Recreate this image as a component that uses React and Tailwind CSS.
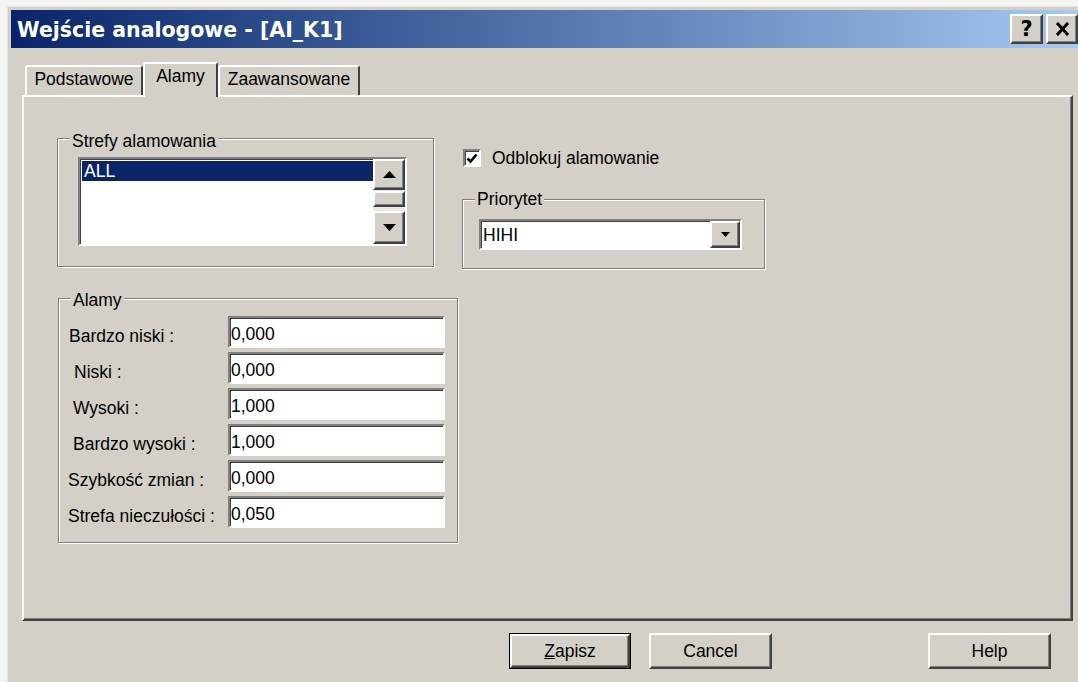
import React from "react";

const raised =
  "border-2 border-t-white border-l-white border-r-[#404040] border-b-[#404040] shadow-[inset_-1px_-1px_0_#808080] bg-[#d4d0c8]";
const sunken =
  "border-2 border-t-[#808080] border-l-[#808080] border-r-white border-b-white shadow-[inset_1px_1px_0_#404040] bg-white";
const etched = "border border-[#808080] shadow-[inset_1px_1px_0_#fff,1px_1px_0_#fff]";

const alarmRows = [
  { label: "Bardzo niski :", value: "0,000", pad: "pl-[10px]" },
  { label: "Niski :", value: "0,000", pad: "pl-[15px]" },
  { label: "Wysoki :", value: "1,000", pad: "pl-[14px]" },
  { label: "Bardzo wysoki :", value: "1,000", pad: "pl-[14px]" },
  { label: "Szybkość zmian :", value: "0,000", pad: "pl-[9px]" },
  { label: "Strefa nieczułości :", value: "0,050", pad: "pl-[9px]" },
];

function GroupBox({ label, labelPos, className, children }) {
  return (
    <div className={`relative ${etched} ${className}`}>
      <span className={`absolute left-[12px] ${labelPos} bg-[#d4d0c8] px-[2px] leading-[20px] whitespace-nowrap`}>
        {label}
      </span>
      {children}
    </div>
  );
}

function Arrow({ dir = "down", w = 13, h = 7 }) {
  const pts = dir === "up" ? `0,${h} ${w},${h} ${w / 2},0` : `0,0 ${w},0 ${w / 2},${h}`;
  return (
    <svg width={w} height={h} viewBox={`0 0 ${w} ${h}`}>
      <polygon points={pts} fill="#000" />
    </svg>
  );
}

function Tab({ children, active, className }) {
  return (
    <div
      className={`flex justify-center pt-[2px] leading-[20px] rounded-t-[3px] border-t-2 border-l-2 border-r-2 border-t-white border-l-white border-r-[#404040] bg-[#d4d0c8] ${
        active ? "relative z-10 h-[35px] -mb-[2px]" : "h-[30px]"
      } ${className}`}
    >
      {children}
    </div>
  );
}

function Button({ children, isDefault, className }) {
  if (isDefault) {
    return (
      <div className={`border border-black h-[36px] ${className}`}>
        <div className={`${raised} h-full flex items-center justify-center`}>{children}</div>
      </div>
    );
  }
  return (
    <div className={`${raised} h-[36px] flex items-center justify-center ${className}`}>{children}</div>
  );
}

export default function App() {
  return (
    <div className="w-[1078px] h-[682px] overflow-hidden bg-[#f4f4f2] pl-[7px] pt-[6px] font-['Liberation_Sans',Arial,sans-serif] text-[17.5px] text-black">
      <div className="w-[1100px] h-[700px] bg-[#d4d0c8] border-l border-t border-[#e8e6e0] pl-[3px] pt-[3px]">
        {/* title bar */}
        <div className="w-[1068px] h-[38px] flex items-center justify-between bg-linear-to-r from-[#0a246a] to-[#a6caf0] pl-[6px] pr-[1px]">
          <span className="pt-[3px] font-['DejaVu_Sans',Verdana,sans-serif] font-bold text-[20.5px] text-white whitespace-nowrap">
            Wejście analogowe - [AI_K1]
          </span>
          <div className="flex gap-[3px]">
            <div className={`${raised} w-[33px] h-[30px] flex items-center justify-center font-['DejaVu_Sans',sans-serif] font-bold text-[21px] leading-none`}>
              ?
            </div>
            <div className={`${raised} w-[32px] h-[30px] flex items-center justify-center`}>
              <svg width="15" height="14" viewBox="0 0 15 14">
                <path d="M2 1 L13 13 M13 1 L2 13" stroke="#000" strokeWidth="3" />
              </svg>
            </div>
          </div>
        </div>

        <div className="pl-[11px] mt-[14px]">
          {/* tabs */}
          <div className="flex items-end h-[33px] pl-[3px]">
            <Tab className="w-[118px]">Podstawowe</Tab>
            <Tab active className="w-[75px]">Alamy</Tab>
            <Tab className="w-[142px]">Zaawansowane</Tab>
          </div>

          {/* tab page */}
          <div className="w-[1051px] h-[526px] flex items-start border-2 border-t-white border-l-white border-r-[#404040] border-b-[#404040] shadow-[inset_-1px_-1px_0_#808080]">
            <div className="ml-[33px] pt-[41px] w-[401px]">
              <GroupBox label="Strefy alamowania" labelPos="-top-[8px]" className="w-[377px] h-[129px] pl-[20px] pt-[18px]">
                <div className={`${sunken} w-[329px] h-[89px] flex`}>
                  <div className="flex-1 pl-[2px] pt-[2px]">
                    <div className="h-[20px] leading-[20px] bg-[#0a246a] text-white pl-[2px]">ALL</div>
                  </div>
                  <div className="w-[32px] flex flex-col">
                    <div className={`${raised} h-[31px] flex items-center justify-center`}>
                      <Arrow dir="up" />
                    </div>
                    <div className="flex-1 bg-[#ebe9e4] pt-[1px]">
                      <div className={`${raised} h-[16px]`} />
                    </div>
                    <div className={`${raised} h-[33px] flex items-center justify-center`}>
                      <Arrow />
                    </div>
                  </div>
                </div>
              </GroupBox>

              <GroupBox label="Alamy" labelPos="-top-[9px]" className="ml-[1px] mt-[31px] w-[400px] h-[245px] pt-[17px]">
                <div className="flex flex-col gap-[4px]">
                  {alarmRows.map((r) => (
                    <div key={r.label} className="flex h-[32px]">
                      <div className={`w-[169px] pt-[10px] leading-[20px] whitespace-nowrap ${r.pad}`}>{r.label}</div>
                      <div className={`${sunken} w-[217px] h-[32px] flex items-center pt-[3px] pl-[1px] leading-[20px]`}>
                        {r.value}
                      </div>
                    </div>
                  ))}
                </div>
              </GroupBox>
            </div>

            <div className="ml-[4px] pt-[51px]">
              <div className="flex items-center pl-[1px]">
                <div className={`${sunken} w-[18px] h-[18px] flex items-center justify-center`}>
                  <svg width="12" height="11" viewBox="0 0 12 11">
                    <path d="M1.5 5.5 L4.5 8.5 L10.5 1.5" fill="none" stroke="#000" strokeWidth="2.6" />
                  </svg>
                </div>
                <span className="ml-[11px] leading-[20px]">Odblokuj alamowanie</span>
              </div>

              <GroupBox label="Priorytet" labelPos="-top-[11px]" className="mt-[31px] w-[303px] h-[70px] pl-[16px] pt-[19px]">
                <div className={`${sunken} w-[263px] h-[31px] flex`}>
                  <div className="flex-1 flex items-center pl-[2px] leading-[20px]">HIHI</div>
                  <div className={`${raised} w-[30px] h-full flex items-center justify-center`}>
                    <Arrow w={9} h={5} />
                  </div>
                </div>
              </GroupBox>
            </div>
          </div>

          {/* dialog buttons */}
          <div className="mt-[12px] w-[1051px] flex">
            <Button isDefault className="ml-[487px] w-[122px]">
              <span>
                <span className="underline">Z</span>apisz
              </span>
            </Button>
            <Button className="ml-[18px] w-[123px]">Cancel</Button>
            <Button className="ml-auto mr-[22px] w-[123px]">Help</Button>
          </div>
        </div>
      </div>
    </div>
  );
}
